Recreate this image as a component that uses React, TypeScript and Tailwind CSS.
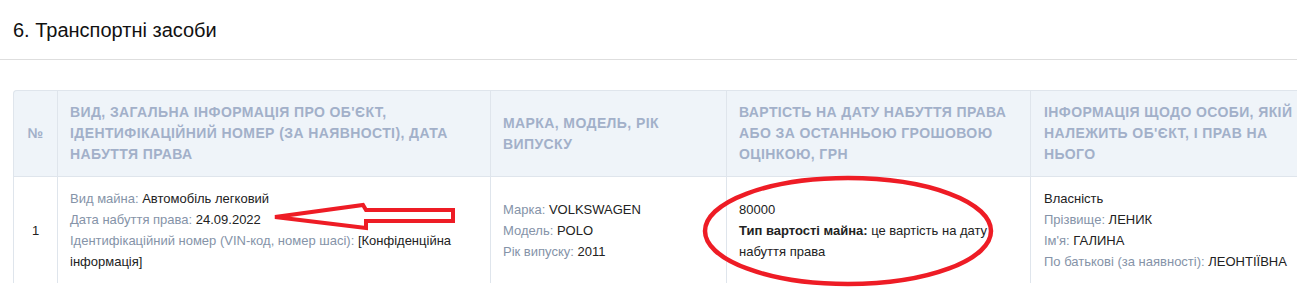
import React from "react";

const font = { fontFamily: '"Liberation Sans", Arial, sans-serif' };

type Field = { label: string; value: string };

function Fields({ items }: { items: Field[] }) {
  return (
    <>
      {items.map((f, i) => (
        <div key={i}>
          <span className="text-[#8593a8]">{f.label}: </span>
          <span className="text-[#222]">{f.value}</span>
        </div>
      ))}
    </>
  );
}

export default function App() {
  return (
    <div className="relative w-[1297px] h-[289px] overflow-hidden bg-white" style={font}>
      <div className="border-b border-[#dedede] pt-[18px] pb-[17px] pl-[13px] text-[20px] leading-[24px] text-[#111]">
        6. Транспортні засоби
      </div>

      <div className="mt-[30px] ml-[13px]">
        <table className="table-fixed border-separate border-spacing-0 w-[1600px] text-[13px] leading-[21px]">
          <colgroup>
            <col className="w-[44px]" />
            <col className="w-[433px]" />
            <col className="w-[236px]" />
            <col className="w-[304px]" />
            <col className="w-[285px]" />
            <col />
          </colgroup>
          <thead>
            <tr className="bg-[#eff4f9] text-[14px] font-bold uppercase tracking-[0.4px] text-[#a2b0c9] leading-[21px]">
              <th className="rounded-tl-[4px] border-t border-l border-b border-[#dfe5ec] py-[11px] text-center font-bold">№</th>
              <th className="border-t border-l border-b border-[#dfe5ec] px-3 py-[11px] text-left font-bold">
                Вид, загальна інформація про об'єкт, ідентифікаційний номер (за наявності), дата набуття права
              </th>
              <th className="border-t border-l border-b border-[#dfe5ec] px-3 py-[11px] text-left font-bold">
                Марка, модель, рік випуску
              </th>
              <th className="border-t border-l border-b border-[#dfe5ec] px-3 py-[11px] text-left font-bold">
                Вартість на дату набуття права або за останньою грошовою оцінкою, грн
              </th>
              <th className="border-t border-l border-b border-[#dfe5ec] pl-[13px] pr-3 py-[11px] text-left font-bold">
                Інформація щодо особи, якій належить об'єкт, і прав на нього
              </th>
              <th className="border-t border-l border-b border-[#dfe5ec] px-3 py-[11px] text-left font-bold"></th>
            </tr>
          </thead>
          <tbody>
            <tr className="align-middle">
              <td className="border-l border-[#dfe5ec] py-[11px] text-center text-[#222]">1</td>
              <td className="border-l border-[#dfe5ec] px-3 py-[11px]">
                <Fields
                  items={[
                    { label: "Вид майна", value: "Автомобіль легковий" },
                    { label: "Дата набуття права", value: "24.09.2022" },
                  ]}
                />
                <div>
                  <span className="text-[#8593a8]">Ідентифікаційний номер (VIN-код, номер шасі): </span>
                  <span className="text-[#222]">[Конфіденційна інформація]</span>
                </div>
              </td>
              <td className="border-l border-[#dfe5ec] px-3 py-[11px]">
                <Fields
                  items={[
                    { label: "Марка", value: "VOLKSWAGEN" },
                    { label: "Модель", value: "POLO" },
                    { label: "Рік випуску", value: "2011" },
                  ]}
                />
              </td>
              <td className="border-l border-[#dfe5ec] px-3 py-[11px] text-[#222]">
                <div className="max-w-[262px]">
                  <div>80000</div>
                  <div>
                    <span className="font-bold">Тип вартості майна:</span> це вартість на дату набуття права
                  </div>
                </div>
              </td>
              <td className="border-l border-[#dfe5ec] pl-[13px] pr-3 py-[11px]">
                <div className="text-[#222]">Власність</div>
                <Fields
                  items={[
                    { label: "Прізвище", value: "ЛЕНИК" },
                    { label: "Ім'я", value: "ГАЛИНА" },
                    { label: "По батькові (за наявності)", value: "ЛЕОНТІЇВНА" },
                  ]}
                />
              </td>
              <td className="border-l border-[#dfe5ec]"></td>
            </tr>
          </tbody>
        </table>
      </div>

      {/* red annotations drawn over the screenshot */}
      <svg className="pointer-events-none absolute left-0 top-0" width="1297" height="289">
        <polygon
          points="275,217 363,205 366,210 453,210 453,221 366,221 366,228"
          fill="none"
          stroke="#ee1c25"
          strokeWidth="4"
          strokeLinejoin="miter"
        />
        <ellipse cx="848" cy="231" rx="143" ry="53" fill="none" stroke="#ee1c25" strokeWidth="4.5" />
      </svg>
    </div>
  );
}
